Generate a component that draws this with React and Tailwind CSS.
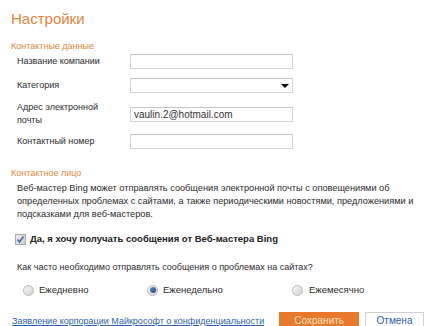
import React from "react";

function Input({ value, select }) {
  return (
    <div className="relative w-[163px] h-[15px] border border-[#d4d4d4] border-t-[#c4c4c4] bg-white flex items-center pl-[3px] text-[10px] text-[#333]">
      {value}
      {select && (
        <div className="absolute right-[3px] top-[5px] w-0 h-0 border-l-[4px] border-r-[4px] border-t-[4px] border-l-transparent border-r-transparent border-t-black" />
      )}
    </div>
  );
}

function Radio({ checked }) {
  return (
    <div className="w-[11px] h-[11px] shrink-0 rounded-full border border-[#b8b8b8] bg-gradient-to-br from-[#f6f6f6] to-[#d2d2d2] flex items-center justify-center">
      {checked && <div className="w-[6px] h-[6px] rounded-full bg-gradient-to-br from-[#6a9ad0] to-[#1c3f6e]" />}
    </div>
  );
}

export default function App() {
  return (
    <div className="w-[424px] h-[326px] overflow-hidden bg-white text-[#2b2b2b] font-['Liberation_Sans',Arial,sans-serif] relative">
      <div className="pl-[11px]">
        <div className="pt-[8px] text-[15px] leading-[22px] text-[#e2863e]">Настройки</div>
        <div className="mt-[10px] text-[9px] leading-[12px] text-[#d98b3a]">Контактные данные</div>
        <div className="pl-[6px]">
          <div className="mt-[2px] flex items-center h-[15px]">
            <div className="w-[113px] text-[9px]">Название компании</div>
            <Input />
          </div>
          <div className="mt-[9px] flex items-center h-[15px]">
            <div className="w-[113px] text-[9px]">Категория</div>
            <Input select />
          </div>
          <div className="mt-[8px] flex items-center h-[26px]">
            <div className="w-[113px] text-[9px] leading-[13px]">Адрес электронной<br />почты</div>
            <Input value="vaulin.2@hotmail.com" />
          </div>
          <div className="mt-[7px] flex items-center h-[15px]">
            <div className="w-[113px] text-[9px]">Контактный номер</div>
            <Input />
          </div>
        </div>
        <div className="mt-[18px] text-[9px] leading-[12px] text-[#d98b3a]">Контактное лицо</div>
        <div className="pl-[6px] w-[404px]">
          <p className="mt-[3px] text-[9.2px] leading-[13px]">
            Веб-мастер Bing может отправлять сообщения электронной почты с оповещениями об определенных проблемах с сайтами, а также периодическими новостями, предложениями и подсказками для веб-мастеров.
          </p>
          <div className="mt-[11px] flex items-center h-[14px] -ml-[2px]">
            <div className="w-[11px] h-[11px] border border-[#a8a8a8] bg-gradient-to-br from-[#eeeeee] to-[#cfcfcf] flex items-center justify-center">
              <svg width="9" height="9" viewBox="0 0 9 9">
                <path d="M1.5 4.5 L3.5 7 L7.5 1.5" fill="none" stroke="#3b6aa8" strokeWidth="1.5" />
              </svg>
            </div>
            <div className="ml-[4px] text-[9.5px] font-bold text-[#222]">Да, я хочу получать сообщения от Веб-мастера Bing</div>
          </div>
          <div className="mt-[15px] h-[13px] text-[9px] leading-[13px]">Как часто необходимо отправлять сообщения о проблемах на сайтах?</div>
          <div className="mt-[9px] h-[14px] flex items-center text-[9.5px]">
            <div className="w-[130px] flex items-center pl-[6px]">
              <Radio />
              <span className="ml-[5px]">Ежедневно</span>
            </div>
            <div className="w-[145px] flex items-center">
              <Radio checked />
              <span className="ml-[5px]">Еженедельно</span>
            </div>
            <div className="flex items-center">
              <Radio />
              <span className="ml-[6px]">Ежемесячно</span>
            </div>
          </div>
        </div>
      </div>
      <div className="mt-[15px] h-[17px] flex items-center">
        <div className="pl-[12px] w-[284px] text-[9px] leading-[12px] text-[#2a62a8] underline decoration-[#2a62a8]">Заявление корпорации Майкрософт о конфиденциальности</div>
        <div className="w-[81px] h-[17px] bg-[#e8782a] text-[#fde3c6] text-[10px] leading-[12px] flex items-center justify-center">Сохранить</div>
        <div className="ml-[6px] w-[60px] h-[17px] border border-[#d0d0d0] bg-white text-[#2a62a8] text-[10px] leading-[12px] flex items-center justify-center">Отмена</div>
      </div>
    </div>
  );
}
